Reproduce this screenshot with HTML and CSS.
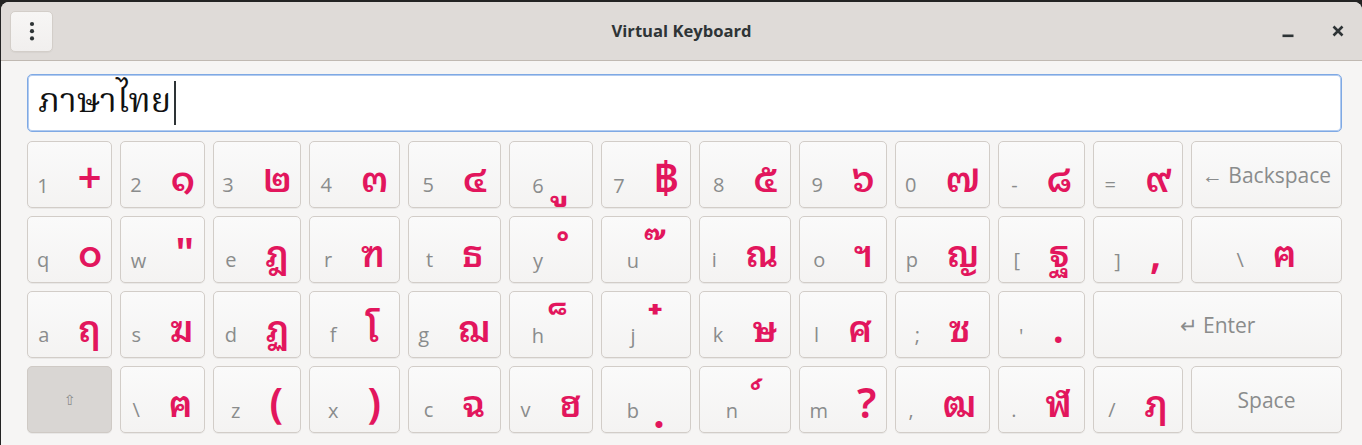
FILE: index.html
```html
<!DOCTYPE html>
<html lang="th">
<head>
<meta charset="utf-8">
<title>Virtual Keyboard</title>
<link rel="stylesheet" href="styles.css">
</head>
<body>
<div class="window">
  <header class="titlebar">
    <div class="tb-left">
      <button class="menu-btn" aria-label="Menu">
        <svg width="6" height="20" viewBox="0 0 6 20"><circle cx="3" cy="3" r="2.1" fill="#2e3436"/><circle cx="3" cy="10.2" r="2.1" fill="#2e3436"/><circle cx="3" cy="17.4" r="2.1" fill="#2e3436"/></svg>
      </button>
    </div>
    <div class="title">Virtual Keyboard</div>
    <div class="tb-right">
      <span class="wc wc-min"><svg width="12" height="12" viewBox="0 0 12 12"><rect x="0.5" y="8.5" width="11" height="2.6" fill="#2e3436"/></svg></span>
      <span class="wc wc-close"><svg width="12" height="12" viewBox="0 0 12 12"><path d="M1.5 1.5 L10.5 10.5 M10.5 1.5 L1.5 10.5" stroke="#2e3436" stroke-width="2.6" stroke-linecap="butt"/></svg></span>
    </div>
  </header>
  <main class="content">
    <div class="entry"><span class="entry-text">ภาษาไทย</span><span class="caret"></span></div>
    <div class="keyboard">
      <div class="key"><span class="lat">1</span><span class="th pn">+</span></div>
      <div class="key"><span class="lat">2</span><span class="th">๑</span></div>
      <div class="key"><span class="lat">3</span><span class="th">๒</span></div>
      <div class="key"><span class="lat">4</span><span class="th">๓</span></div>
      <div class="key"><span class="lat">5</span><span class="th">๔</span></div>
      <div class="key mk"><span class="lat">6</span><span class="th">&#160;ู</span></div>
      <div class="key"><span class="lat">7</span><span class="th pn baht">฿</span></div>
      <div class="key"><span class="lat">8</span><span class="th">๕</span></div>
      <div class="key"><span class="lat">9</span><span class="th">๖</span></div>
      <div class="key"><span class="lat">0</span><span class="th">๗</span></div>
      <div class="key"><span class="lat">-</span><span class="th">๘</span></div>
      <div class="key"><span class="lat">=</span><span class="th">๙</span></div>
      <div class="key special"><span class="sp">← Backspace</span></div>

      <div class="key"><span class="lat">q</span><span class="th">๐</span></div>
      <div class="key"><span class="lat">w</span><span class="th pn">"</span></div>
      <div class="key"><span class="lat">e</span><span class="th">ฎ</span></div>
      <div class="key"><span class="lat">r</span><span class="th">ฑ</span></div>
      <div class="key"><span class="lat">t</span><span class="th">ธ</span></div>
      <div class="key mk"><span class="lat">y</span><span class="th">&#160;ํ</span></div>
      <div class="key mk"><span class="lat">u</span><span class="th">&#160;๊</span></div>
      <div class="key"><span class="lat">i</span><span class="th">ณ</span></div>
      <div class="key"><span class="lat">o</span><span class="th">ฯ</span></div>
      <div class="key"><span class="lat">p</span><span class="th">ญ</span></div>
      <div class="key"><span class="lat">[</span><span class="th">ฐ</span></div>
      <div class="key"><span class="lat">]</span><span class="th pn">,</span></div>
      <div class="key"><span class="lat">\</span><span class="th">ฅ</span></div>

      <div class="key"><span class="lat">a</span><span class="th">ฤ</span></div>
      <div class="key"><span class="lat">s</span><span class="th">ฆ</span></div>
      <div class="key"><span class="lat">d</span><span class="th">ฏ</span></div>
      <div class="key"><span class="lat">f</span><span class="th">โ</span></div>
      <div class="key"><span class="lat">g</span><span class="th">ฌ</span></div>
      <div class="key mk"><span class="lat">h</span><span class="th">&#160;็</span></div>
      <div class="key mk"><span class="lat">j</span><span class="th">&#160;๋</span></div>
      <div class="key"><span class="lat">k</span><span class="th">ษ</span></div>
      <div class="key"><span class="lat">l</span><span class="th">ศ</span></div>
      <div class="key"><span class="lat">;</span><span class="th">ซ</span></div>
      <div class="key"><span class="lat">'</span><span class="th pn">.</span></div>
      <div class="key special enter"><span class="sp">↵ Enter</span></div>

      <div class="key shift"><span class="shift-glyph">⇧</span></div>
      <div class="key"><span class="lat">\</span><span class="th">ฅ</span></div>
      <div class="key"><span class="lat">z</span><span class="th pn">(</span></div>
      <div class="key"><span class="lat">x</span><span class="th pn">)</span></div>
      <div class="key"><span class="lat">c</span><span class="th">ฉ</span></div>
      <div class="key"><span class="lat">v</span><span class="th">ฮ</span></div>
      <div class="key mk"><span class="lat">b</span><span class="th">&#160;ฺ</span></div>
      <div class="key mk"><span class="lat">n</span><span class="th">&#160;์</span></div>
      <div class="key"><span class="lat">m</span><span class="th pn">?</span></div>
      <div class="key"><span class="lat">,</span><span class="th">ฒ</span></div>
      <div class="key"><span class="lat">.</span><span class="th">ฬ</span></div>
      <div class="key"><span class="lat">/</span><span class="th">ฦ</span></div>
      <div class="key special"><span class="sp">Space</span></div>
    </div>
  </main>
</div>
</body>
</html>
```

FILE: styles.css
```css
html, body {
  margin: 0;
  padding: 0;
}

body {
  width: 1362px;
  height: 445px;
  overflow: hidden;
  background: #232323;
  font-family: "Open Sans", "Noto Sans", "Liberation Sans", sans-serif;
}

.window {
  margin: 2px 0 0 1px;
  height: 443px;
  background: #f6f5f4;
  border-radius: 8px 8px 0 0;
  overflow: hidden;
}

.titlebar {
  height: 58px;
  border-bottom: 1px solid #c0b9b2;
  background: #dfdbd8;
  display: grid;
  grid-template-columns: 1fr auto 1fr;
  align-items: center;
}

.tb-left {
  display: flex;
  padding-left: 9px;
}

.menu-btn {
  width: 43px;
  height: 41px;
  margin: 0;
  padding: 0;
  border: 1px solid #d3cec9;
  border-radius: 5px;
  background: linear-gradient(#f7f6f5, #f1efee);
  box-shadow: 0 1px 1px rgba(0, 0, 0, 0.04);
  display: flex;
  align-items: center;
  justify-content: center;
}

.title {
  font-weight: 700;
  font-size: 16.6px;
  color: #2e3436;
  letter-spacing: 0;
  margin-top: -1px;
}

.tb-right {
  display: flex;
  justify-content: flex-end;
  align-items: center;
  padding-right: 18px;
  gap: 38px;
}

.wc {
  display: flex;
  width: 12px;
  height: 12px;
}

.wc-min {
  margin-top: 1px;
}

.wc-close {
  margin-top: -1px;
}

.content {
  padding: 13px 0 0 26px;
}

.entry {
  box-sizing: border-box;
  width: 1315px;
  height: 58px;
  background: #ffffff;
  border: 1px solid #7fa9e4;
  box-shadow: inset 0 0 0 1px #b1cbf0;
  border-radius: 5px;
  display: flex;
  align-items: center;
  padding-left: 10px;
}

.entry-text {
  font-family: "Noto Serif Thai", "Norasi", "Kinnari", "Noto Sans Thai Looped", "Noto Sans Thai", "DejaVu Serif", serif;
  font-size: 34px;
  color: #111111;
  line-height: 44px;
}

.caret {
  display: inline-block;
  width: 2px;
  height: 44px;
  background: #2e3436;
  margin-left: 3px;
}

.keyboard {
  margin-top: 9px;
  display: grid;
  grid-template-columns: 85px 85px 88px 91px 93px 84px 90px 92px 88px 95px 87px 90px 151px;
  grid-auto-rows: 67px;
  gap: 8px;
}

.key {
  box-sizing: border-box;
  border: 1px solid #d2cdc8;
  border-radius: 5px;
  background: linear-gradient(#fafafa, #f4f3f2);
  box-shadow: 0 1px 0 rgba(0, 0, 0, 0.05);
  display: flex;
  justify-content: center;
  align-items: baseline;
  gap: 29px;
  padding-top: 9px;
}

.key.mk {
  gap: 15px;
}

.lat {
  font-size: 20px;
  color: #8a8c8c;
  line-height: 50px;
}

.th {
  font-family: "Noto Sans Thai Looped", "Loma", "Garuda", "Noto Serif Thai", "Noto Sans Thai", "DejaVu Sans", sans-serif;
  font-weight: 600;
  font-size: 36px;
  color: #e2165d;
  line-height: 50px;
}

.th.pn {
  font-size: 42px;
  line-height: 46px;
}

.th.baht {
  font-size: 44px;
  line-height: 45px;
}

.mk .th {
  font-size: 43px;
  line-height: 45px;
}

.special {
  align-items: center;
  padding-top: 0;
}

.sp {
  font-size: 21px;
  color: #8a8c8c;
}

.enter {
  grid-column: span 2;
}

.shift {
  background: #d9d6d3;
  border-color: #cfcac5;
  align-items: center;
  padding-top: 0;
}

.shift-glyph {
  font-family: "DejaVu Sans", sans-serif;
  font-size: 14px;
  color: #8a8c8c;
}
```
